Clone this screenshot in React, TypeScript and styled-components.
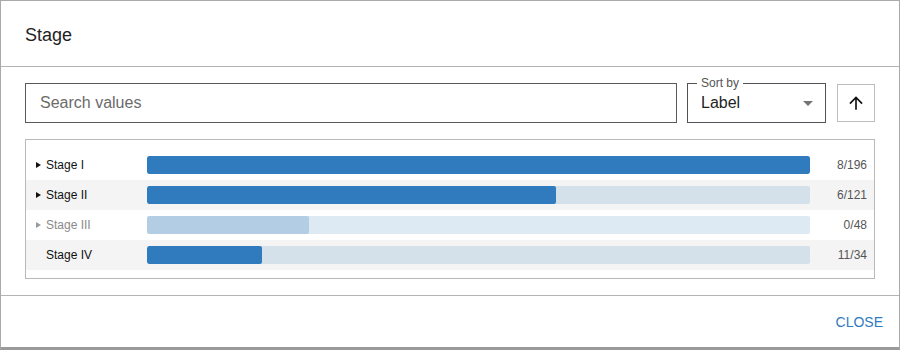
import styled, { createGlobalStyle } from 'styled-components'
import { useState } from 'react'

interface StageValue {
  label: string
  count: number
  total: number
  ratio: number
  expandable: boolean
  disabled?: boolean
}

const values: StageValue[] = [
  { label: 'Stage I', count: 8, total: 196, ratio: 1, expandable: true },
  { label: 'Stage II', count: 6, total: 121, ratio: 0.617, expandable: true },
  { label: 'Stage III', count: 0, total: 48, ratio: 0.245, expandable: true, disabled: true },
  { label: 'Stage IV', count: 11, total: 34, ratio: 0.174, expandable: false },
]

const GlobalStyle = createGlobalStyle`
  html, body {
    margin: 0;
    padding: 0;
    background: #ffffff;
    font-family: 'Liberation Sans', Arial, sans-serif;
  }
  * {
    box-sizing: border-box;
  }
`

const Dialog = styled.div`
  width: 900px;
  height: 350px;
  display: flex;
  flex-direction: column;
  background: #fff;
  border: 1px solid #a9a9a9;
  border-bottom: 3px solid #9a9a9a;
`

const Header = styled.div`
  height: 66px;
  flex-shrink: 0;
  display: flex;
  align-items: center;
  padding: 3px 24px 0;
  border-bottom: 1px solid #b4b4b4;
`

const Title = styled.h2`
  margin: 0;
  font-size: 18px;
  font-weight: 400;
  color: #1f1f1f;
`

const Content = styled.div`
  flex: 1;
  padding: 16px 24px;
  border-bottom: 1px solid #b4b4b4;
`

const Toolbar = styled.div`
  display: flex;
  align-items: center;
  gap: 10px;
  height: 40px;
`

const SearchInput = styled.input`
  flex: 1;
  height: 40px;
  padding: 0 14px;
  border: 1px solid #5a5a5a;
  border-radius: 0;
  font-family: inherit;
  font-size: 16px;
  color: #222;
  outline: none;
  &::placeholder {
    color: #6b6b6b;
  }
`

const SelectBox = styled.div`
  position: relative;
  width: 139px;
  height: 40px;
  border: 1px solid #4f5256;
  display: flex;
  align-items: center;
  justify-content: space-between;
  padding: 0 12px 0 13px;
  cursor: pointer;
`

const SelectLegend = styled.span`
  position: absolute;
  top: -8px;
  left: 9px;
  padding: 0 4px;
  background: #fff;
  font-size: 12px;
  color: #555;
`

const SelectValue = styled.span`
  font-size: 16px;
  color: #1f1f1f;
`

const Caret = styled.span`
  width: 0;
  height: 0;
  border-left: 5px solid transparent;
  border-right: 5px solid transparent;
  border-top: 5px solid #757575;
`

const SortButton = styled.button`
  width: 38px;
  height: 38px;
  margin-left: 1px;
  border: 1px solid #bdbdbd;
  background: #fff;
  display: flex;
  align-items: center;
  justify-content: center;
  padding: 0;
  cursor: pointer;
`

const List = styled.div`
  margin-top: 16px;
  border: 1px solid #b9b9b9;
  padding: 10px 0 8px;
`

const Row = styled.div<{ $striped: boolean }>`
  height: 30px;
  display: flex;
  align-items: center;
  background: ${({ $striped }) => ($striped ? '#f4f4f4' : '#fff')};
`

const LabelCell = styled.div<{ $disabled?: boolean }>`
  width: 121px;
  flex-shrink: 0;
  display: flex;
  align-items: center;
  padding-left: 10px;
  font-size: 12px;
  color: ${({ $disabled }) => ($disabled ? '#8a8a8a' : '#111')};
`

const Arrow = styled.span<{ $visible: boolean; $disabled?: boolean }>`
  width: 0;
  height: 0;
  margin-right: 5px;
  border-top: 3px solid transparent;
  border-bottom: 3px solid transparent;
  border-left: 5px solid ${({ $disabled }) => ($disabled ? '#9a9a9a' : '#111')};
  visibility: ${({ $visible }) => ($visible ? 'visible' : 'hidden')};
`

const Track = styled.div<{ $disabled?: boolean }>`
  flex: 1;
  height: 18px;
  border-radius: 2px;
  overflow: hidden;
  background: ${({ $disabled }) => ($disabled ? '#dde9f3' : '#d4e0ea')};
`

const Fill = styled.div<{ $disabled?: boolean }>`
  height: 100%;
  border-radius: 2px;
  background: ${({ $disabled }) => ($disabled ? '#b3cee4' : '#307bbe')};
`

const CountCell = styled.div`
  width: 64px;
  flex-shrink: 0;
  text-align: right;
  padding-right: 7px;
  font-size: 12px;
  color: #555;
`

const Footer = styled.div`
  height: 52px;
  flex-shrink: 0;
  display: flex;
  align-items: center;
  justify-content: flex-end;
  padding-right: 8px;
`

const CloseButton = styled.button`
  background: none;
  border: none;
  padding: 6px 8px;
  font-family: inherit;
  font-size: 14px;
  color: #2f7bc0;
  text-transform: uppercase;
  cursor: pointer;
`

export default function App() {
  const [search, setSearch] = useState('')
  const shown = values.filter((v) => v.label.toLowerCase().includes(search.toLowerCase()))

  return (
    <>
      <GlobalStyle />
      <Dialog>
        <Header>
          <Title>Stage</Title>
        </Header>
        <Content>
          <Toolbar>
            <SearchInput
              placeholder="Search values"
              value={search}
              onChange={(e) => setSearch(e.target.value)}
            />
            <SelectBox>
              <SelectLegend>Sort by</SelectLegend>
              <SelectValue>Label</SelectValue>
              <Caret />
            </SelectBox>
            <SortButton aria-label="Sort direction">
              <svg width="20" height="20" viewBox="0 0 24 24">
                <path d="M4 12l1.41 1.41L11 7.83V20h2V7.83l5.58 5.59L20 12l-8-8-8 8z" fill="#111" />
              </svg>
            </SortButton>
          </Toolbar>
          <List>
            {shown.map((v, i) => (
              <Row key={v.label} $striped={i % 2 === 1}>
                <LabelCell $disabled={v.disabled}>
                  <Arrow $visible={v.expandable} $disabled={v.disabled} />
                  {v.label}
                </LabelCell>
                <Track $disabled={v.disabled}>
                  <Fill $disabled={v.disabled} style={{ width: `${v.ratio * 100}%` }} />
                </Track>
                <CountCell>
                  {v.count}/{v.total}
                </CountCell>
              </Row>
            ))}
          </List>
        </Content>
        <Footer>
          <CloseButton>Close</CloseButton>
        </Footer>
      </Dialog>
    </>
  )
}
